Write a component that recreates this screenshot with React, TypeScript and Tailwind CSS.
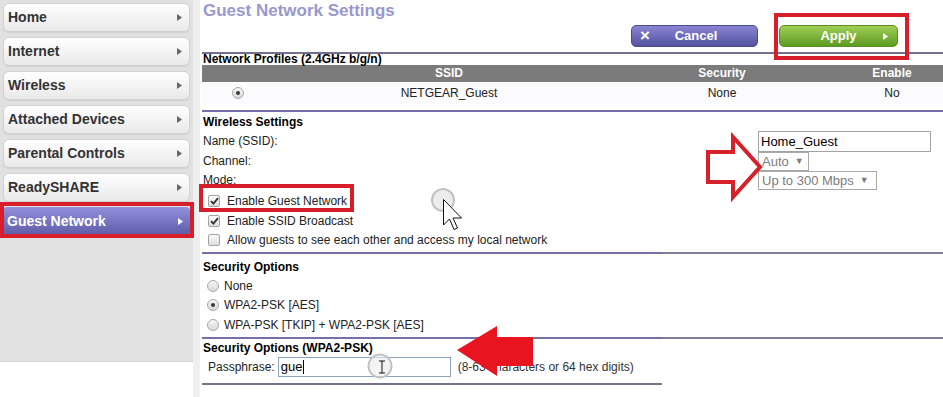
import React from 'react';

const menu = ['Home', 'Internet', 'Wireless', 'Attached Devices', 'Parental Controls', 'ReadySHARE'];

const Tri = ({ color }: { color: string }) => (
  <svg width="5" height="7" viewBox="0 0 5 7">
    <path d="M0 0 L5 3.5 L0 7Z" fill={color} />
  </svg>
);

const Radio = ({ checked }: { checked?: boolean }) => (
  <span className="flex h-[12px] w-[12px] shrink-0 items-center justify-center rounded-full border border-[#a9a9a9] bg-gradient-to-b from-[#f6f6f6] to-[#d9d9d9]">
    {checked && <span className="h-[4px] w-[4px] rounded-full bg-[#3a3a3a]" />}
  </span>
);

const Check = ({ checked }: { checked?: boolean }) => (
  <span className="flex h-[12px] w-[12px] shrink-0 items-center justify-center rounded-[2px] border border-[#a3a3a3] bg-gradient-to-b from-[#fbfbfb] to-[#dedede]">
    {checked && (
      <svg width="9" height="8" viewBox="0 0 9 8">
        <path d="M1 4.2 L3.4 6.6 L8 1.2" fill="none" stroke="#333" strokeWidth="1.8" />
      </svg>
    )}
  </span>
);

const SplitLine = () => (
  <div className="flex h-[2px]">
    <div className="w-[460px] bg-[#7670a8]" />
    <div className="flex-1 bg-[#817d96]" />
  </div>
);

function Sidebar() {
  return (
    <div className="w-[193px] shrink-0">
      <div className="flex h-[362px] flex-col gap-[5px] border-b border-[#d4d4d4] bg-[#e1e1e1] px-[3px] pt-[3px]">
        {menu.map((m) => (
          <div
            key={m}
            className="flex h-[29px] items-center justify-between rounded-[6px] border border-[#d2d2d2] bg-gradient-to-b from-white to-[#e9e9e9] pl-[4px] pr-[7px] shadow-[0_1px_1px_rgba(0,0,0,0.08)]"
          >
            <span className="text-[14px] font-bold text-[#333]">{m}</span>
            <Tri color="#666" />
          </div>
        ))}
        <div className="flex h-[29px] items-center justify-between rounded-[4px] bg-gradient-to-b from-[#9390dc] to-[#5d5ba8] pl-[4px] pr-[7px]">
          <span className="text-[14px] font-bold text-white">Guest Network</span>
          <Tri color="#fff" />
        </div>
      </div>
    </div>
  );
}

export default function App() {
  return (
    <div className="relative flex h-[397px] w-[943px] overflow-hidden bg-white font-['Liberation_Sans',Arial,sans-serif] text-[12px] text-[#222]">
      <Sidebar />
      <div className="w-[7px] shrink-0 bg-[#efefef]" />

      <main className="flex-1 pl-[2px]">
        {/* header */}
        <div className="flex h-[52px] justify-between">
          <h1 className="pl-[1px] pt-[1px] text-[17px] font-bold leading-[20px] text-[#9a98cd]">Guest Network Settings</h1>
          <div className="mt-[25px] flex h-[22px] gap-[21px] pr-[45px]">
            <button className="relative flex h-[22px] w-[127px] items-center justify-center rounded-[5px] border border-[#4b4992] bg-gradient-to-b from-[#8886d2] to-[#5553a1] pl-[3px] text-[13px] font-bold text-white">
              <span className="absolute left-[8px] top-[0px] text-[17px] leading-[20px]">×</span>
              Cancel
            </button>
            <button className="relative flex h-[22px] w-[119px] items-center justify-center rounded-[5px] border border-[#5b8f22] bg-gradient-to-b from-[#9fce55] to-[#5e9b22] text-[13px] font-bold text-white">
              Apply
              <span className="absolute right-[9px] top-[7px]">
                <Tri color="#fff" />
              </span>
            </button>
          </div>
        </div>
        <div className="h-[2px] bg-[#736f8c]" />

        {/* profiles */}
        <div className="h-[11px] pl-[1px] font-bold leading-[11px] text-black">Network Profiles (2.4GHz b/g/n)</div>
        <div className="grid h-[17px] grid-cols-[71px_352px_194px_1fr] bg-[#7b7b7b] text-center font-bold leading-[17px] text-white">
          <span />
          <span>SSID</span>
          <span>Security</span>
          <span className="pl-[22px]">Enable</span>
        </div>
        <div className="grid h-[22px] grid-cols-[71px_352px_194px_1fr] items-center bg-[#fbfbfd] text-center">
          <span className="flex justify-center">
            <Radio checked />
          </span>
          <span>NETGEAR_Guest</span>
          <span>None</span>
          <span className="pl-[22px]">No</span>
        </div>
        <div className="h-[6px]" />
        <div className="h-[2px] bg-[#7670a8]" />

        {/* wireless settings */}
        <div className="h-[19px] pl-[1px] pt-[2px] font-bold leading-[17px] text-black">Wireless Settings</div>
        <div className="grid grid-cols-[556px_1fr]">
          <div className="h-[21px] pl-[1px] leading-[21px]">Name (SSID):</div>
          <div className="h-[21px]">
            <div className="h-[21px] w-[173px] border border-[#a3a3a3] pl-[2px] text-[13px] leading-[19px] text-black">Home_Guest</div>
          </div>
          <div className="h-[19px] pl-[1px] leading-[19px]">Channel:</div>
          <div className="h-[19px]">
            <div className="flex h-[19px] w-[51px] items-center gap-[6px] border border-[#a9a9a9] pl-[3px] text-[13px] text-[#7c7c7c]">
              Auto <span className="text-[9px]">▼</span>
            </div>
          </div>
          <div className="h-[19px] pl-[1px] leading-[19px]">Mode:</div>
          <div className="h-[19px]">
            <div className="flex h-[19px] w-[119px] items-center gap-[6px] border border-[#a9a9a9] pl-[3px] text-[13px] text-[#7c7c7c]">
              Up to 300 Mbps <span className="text-[9px]">▼</span>
            </div>
          </div>
        </div>
        <div className="flex h-[21px] items-center gap-[7px] pl-[6px]">
          <Check checked />
          <span>Enable Guest Network</span>
        </div>
        <div className="flex h-[19px] items-center gap-[7px] pl-[6px]">
          <Check checked />
          <span>Enable SSID Broadcast</span>
        </div>
        <div className="flex h-[19px] items-center gap-[7px] pl-[6px]">
          <Check />
          <span>Allow guests to see each other and access my local network</span>
        </div>
        <div className="h-[3px]" />
        <SplitLine />

        {/* security options */}
        <div className="h-[22px] pl-[1px] pt-[4px] font-bold leading-[18px] text-black">Security Options</div>
        <div className="flex h-[19px] items-center gap-[5px] pl-[5px]">
          <Radio />
          <span>None</span>
        </div>
        <div className="flex h-[20px] items-center gap-[5px] pl-[5px]">
          <Radio checked />
          <span>WPA2-PSK [AES]</span>
        </div>
        <div className="flex h-[19px] items-center gap-[5px] pl-[5px]">
          <Radio />
          <span>WPA-PSK [TKIP] + WPA2-PSK [AES]</span>
        </div>
        <div className="h-[3px]" />
        <SplitLine />
        <div className="h-[18px] pl-[1px] font-bold leading-[18px] text-black">Security Options (WPA2-PSK)</div>
        <div className="flex h-[20px] items-center pl-[6px]">
          <span>Passphrase:</span>
          <div className="ml-[3px] flex h-[20px] w-[173px] items-center border border-[#8aa4bd] pl-[2px] text-[13px] text-black">
            gue
            <span className="ml-[1px] h-[14px] w-[1px] bg-black" />
          </div>
          <span className="ml-[7px] text-[#333]">(8-63 characters or 64 hex digits)</span>
        </div>
        <div className="h-[6px]" />
        <div className="h-[2px] w-[460px] bg-[#75718f]" />
      </main>

      {/* annotations */}
      <div className="absolute left-[774px] top-[13px] h-[47px] w-[135px] border-4 border-[#d81d2b]" />
      <div className="absolute left-0 top-[202px] h-[36px] w-[194px] border-4 border-[#d81d2b]" />
      <div className="absolute left-[199px] top-[184px] h-[28px] w-[155px] border-4 border-[#d81d2b]" />

      <svg className="absolute left-[700px] top-[130px]" width="70" height="76" viewBox="700 130 70 76">
        <path d="M708 152 L733 152 L733 137 L760 167 L733 197 L733 182 L708 182 Z" fill="#fff" stroke="#d6202a" strokeWidth="4" strokeLinejoin="miter" />
      </svg>

      <svg className="absolute left-[450px] top-[320px]" width="90" height="62" viewBox="450 320 90 62">
        <path d="M457 350 L497 326 L497 337 L533 337 L533 366 L497 366 L497 376 Z" fill="#e8141f" />
      </svg>

      {/* mouse cursor near checkbox */}
      <svg className="absolute left-[430px] top-[187px]" width="36" height="50" viewBox="430 187 36 50">
        <circle cx="443" cy="200" r="11" fill="#ececec" stroke="#c2c2c2" strokeWidth="2" />
        <path d="M443.5 199.5 L443.5 225 L449.5 219 L454 229.5 L457.5 228 L453 218 L461.5 218 Z" fill="#fff" stroke="#111" strokeWidth="1" strokeLinejoin="round" />
      </svg>

      {/* text cursor in passphrase */}
      <svg className="absolute left-[366px] top-[352px]" width="28" height="28" viewBox="366 352 28 28">
        <circle cx="380" cy="366" r="11.5" fill="#ececec" fillOpacity="0.6" stroke="#c2c2c2" strokeWidth="2" />
        <path d="M379 361 L385 361 M382 361 L382 373 M379 373 L385 373" stroke="#111" strokeWidth="1" fill="none" />
      </svg>
    </div>
  );
}
